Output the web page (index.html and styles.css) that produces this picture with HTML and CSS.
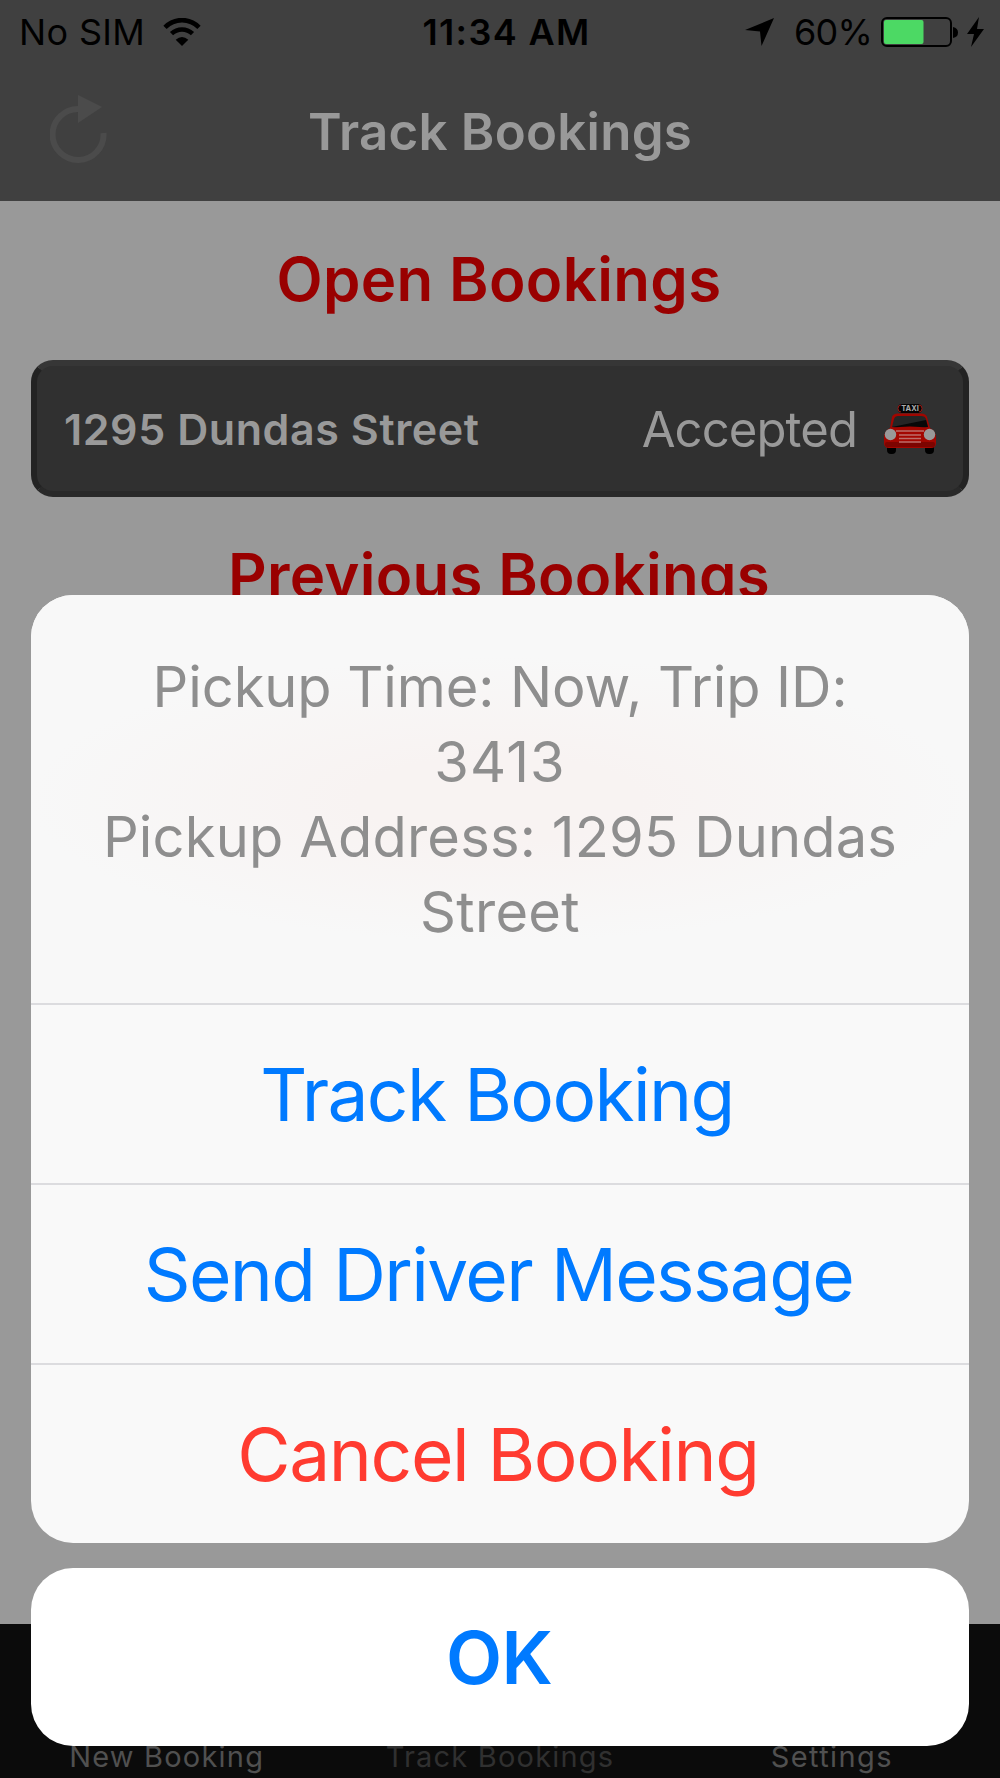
FILE: index.html
```html
<!DOCTYPE html>
<html lang="en">
<head>
<meta charset="utf-8">
<title>Track Bookings</title>
<link rel="stylesheet" href="styles.css">
</head>
<body>
<div class="screen">
  <header class="top">
    <div class="status">
      <div class="status-left">
        <span class="carrier">No SIM</span>
        <svg class="wifi" viewBox="0 0 38 28" width="38" height="28">
          <path d="M2 9.3C11.5-.3 26.500-.3 36 9.300" fill="none" stroke="#000" stroke-width="4.600"/>
          <path d="M8.500 15.700C14.500 10 23.500 10 29.500 15.700" fill="none" stroke="#000" stroke-width="4.600"/>
          <path d="M12.700 21.700Q19 16.300 25.300 21.700L19 28Z"/>
        </svg>
      </div>
      <span class="time">11:34 AM</span>
      <div class="status-right">
        <svg class="arrow" viewBox="0 0 29 29" width="29" height="29"><path d="M29 0 16.500 28 15 13.500 0 12Z"/></svg>
        <span class="percent">60%</span>
        <svg class="battery" viewBox="0 0 78 30" width="78" height="30">
          <rect x="1" y="1" width="69" height="28" rx="5" fill="none" stroke="#000" stroke-width="2"/>
          <rect x="3" y="3" width="39.500" height="24" rx="2" fill="#4cd964"/>
          <path d="M72 10Q77 11 77 15.500T72 21Z"/>
        </svg>
        <svg class="bolt" viewBox="0 0 17 30" width="17" height="30"><path d="M12 0 0 17H7L4 30 17 12H10Z"/></svg>
      </div>
    </div>
    <div class="nav">
      <svg class="refresh" viewBox="0 0 58 68" width="58" height="68">
        <path d="M29 14A25.500 25.500 0 1 0 53.500 38" fill="none" stroke="#4b4b4b" stroke-width="6"/>
        <path d="M28 0 52 12 28 28Z" fill="#4b4b4b"/>
      </svg>
      <h1 class="title"><span>Track Bookings</span></h1>
    </div>
  </header>
  <main class="content">
    <h2 class="heading open"><span>Open Bookings</span></h2>
    <div class="booking">
      <span class="address">1295 Dundas Street</span>
      <span class="state">Accepted</span>
      <svg class="taxi" viewBox="0 0 54 52" width="54" height="52">
        <rect x="4" y="40" width="9" height="10" rx="4"/>
        <rect x="42" y="40" width="9" height="10" rx="4"/>
        <path d="M7 24 9 13Q10 9.500 15 9.500H38Q43 9.500 44 13L47 24Z" fill="#a10600"/>
        <path d="M9 23 11 15Q12 12 15 12H38Q42 12 43 15L45 23Q27 25 9 23Z" fill="#252525"/>
        <path d="M9 23 43 16 45 23Q27 25 9 23Z" fill="#080808"/>
        <path d="M7 24Q27 21 47 24Q53 27 53 34V39Q53 44 48 44H6Q1 44 1 39V34Q1 27 7 24Z" fill="#a30600"/>
        <rect x="2" y="38" width="50" height="5" rx="2" fill="#7d0400"/>
        <path d="M13 27H41M16 31H38M16 34.500H38M16 38H38" stroke="#bd6e6a" stroke-width="1.700"/>
        <circle cx="7.500" cy="30.500" r="5.700" fill="#999"/>
        <circle cx="46.500" cy="30.500" r="5.700" fill="#999"/>
        <rect x="15" y="0" width="24" height="9" rx="4" fill="#050505"/>
        <path d="M18 1Q15 1 15 4.500T18 8M36 1Q39 1 39 4.500T36 8" fill="none" stroke="#9c1510" stroke-width="1"/>
        <text x="27" y="7.200" text-anchor="middle" font-size="7.500" font-weight="700" fill="#aaa">TAXI</text>
      </svg>
    </div>
    <h2 class="heading previous"><span>Previous Bookings</span></h2>
  </main>
  <nav class="tabs">
    <span class="tab tab-new">New Booking</span>
    <span class="tab tab-track">Track Bookings</span>
    <span class="tab tab-settings">Settings</span>
  </nav>
  <div class="sheet">
    <div class="card">
      <div class="message">
        <span class="trip">Pickup Time: Now, Trip ID:</span>
        <span class="trip-id">3413</span>
        <span class="pickup">Pickup Address: 1295 Dundas</span>
        <span class="street">Street</span>
      </div>
      <div class="action track"><span>Track Booking</span></div>
      <div class="action send"><span>Send Driver Message</span></div>
      <div class="action danger"><span>Cancel Booking</span></div>
    </div>
    <div class="ok"><span>OK</span></div>
  </div>
</div>
</body>
</html>
```
FILE: styles.css
```css
* { box-sizing: border-box; }
body { margin: 0; font-family: Inter, "Liberation Sans", sans-serif; }
h1, h2 { margin: 0; font-weight: 600; }
svg { display: block; flex: none; }
span { white-space: nowrap; }
.screen { position: relative; width: 1000px; height: 1778px; display: flex; flex-direction: column; overflow: hidden; background: #999; }
.top { height: 201px; background: #404040; }
.status { height: 64px; display: grid; grid-template-columns: 1fr auto 1fr; align-items: center; font-size: 36px; padding: 0 16px 0 19px; color: #000; }
.status-left, .status-right { display: flex; align-items: center; }
.status-right { justify-content: flex-end; }
.carrier { letter-spacing: .35px; }
.wifi { margin-left: 18px; }
.time { font-weight: 600; letter-spacing: 1.35px; margin-left: 10px; }
.arrow { margin-right: 20px; }
.percent { letter-spacing: -.8px; margin-right: 9px; }
.bolt { margin-left: 8px; }
.nav { height: 137px; display: grid; grid-template-columns: 108px 1fr 108px; padding-top: 31px; }
.refresh { margin-left: 50px; }
.title { font-size: 51px; line-height: 74px; text-align: center; color: #999; letter-spacing: .25px; }
.content { height: 1423px; padding: 0 31px; }
.heading { font-size: 60px; line-height: 72px; text-align: center; color: #900; }
.open { padding-top: 42px; height: 159px; letter-spacing: .35px; padding-right: 2px; }
.booking { height: 137px; border-radius: 22px; background: #303030; border: 6px solid #232323; border-top-color: #363636; border-bottom-color: #292929; display: flex; align-items: center; padding: 0 26px 0 27px; color: #999; }
.address { font-size: 43px; font-weight: 600; flex: 1; letter-spacing: .57px; }
.state { font-size: 49px; letter-spacing: -.9px; padding-top: 2px; }
.taxi { margin-left: 26px; margin-top: 3px; }
.previous { padding-top: 42px; letter-spacing: .27px; padding-right: 2px; }
.tabs { flex: 1; background: #0b0b0b; display: grid; grid-template-columns: 1fr 1fr 1fr; align-items: end; text-align: center; font-size: 29px; line-height: 36px; color: #505050; padding-bottom: 3px; letter-spacing: 1.2px; }
.tab-track { color: #303030; }
.tab-settings { padding-right: 3px; letter-spacing: 1.4px; }
.sheet { position: absolute; left: 31px; right: 31px; top: 595px; display: flex; flex-direction: column; gap: 25px; }
.card { border-radius: 42px; background: #f9f9f9; overflow: hidden; }
.message { height: 408px; padding-top: 55px; display: flex; flex-direction: column; align-items: center; font-size: 56px; line-height: 75px; color: #8e8e8e; background: radial-gradient(ellipse 50% 35% at 50% 50%, #f8f3f2 30%, #f8f8f8); }
.trip { letter-spacing: -.08px; }
.trip-id { letter-spacing: 1.1px; }
.pickup { letter-spacing: .17px; }
.street { letter-spacing: .3px; }
.action { height: 180px; border-top: 2px solid #dcdcdf; display: flex; align-items: center; justify-content: center; font-size: 73px; color: #007aff; }
.track { letter-spacing: -1.65px; padding-right: 6px; }
.send { letter-spacing: -1.65px; padding-right: 3px; }
.danger { color: #ff3b30; letter-spacing: -1.4px; padding-right: 4px; }
.ok { height: 178px; border-radius: 42px; background: #fff; display: flex; align-items: center; justify-content: center; font-size: 73px; font-weight: 600; color: #007aff; letter-spacing: -.8px; padding-right: 2px; }
```
